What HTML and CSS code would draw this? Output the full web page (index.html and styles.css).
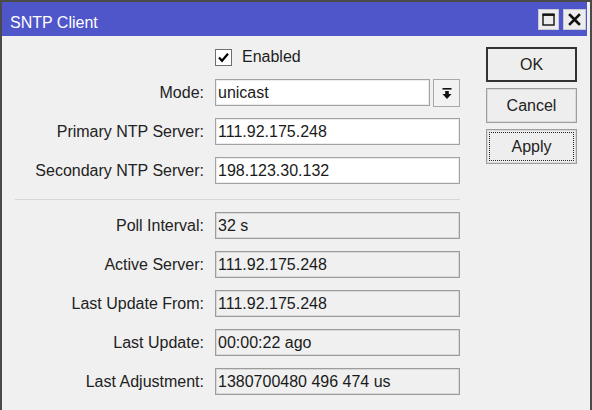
FILE: index.html
```html
<!DOCTYPE html>
<html>
<head>
<meta charset="utf-8">
<title>SNTP Client</title>
<link rel="stylesheet" href="styles.css">
</head>
<body>
<div class="window">
  <div class="titlebar">
    <span class="title">SNTP Client</span>
    <div class="title-buttons">
      <span class="tbtn"><svg width="13" height="13" viewBox="0 0 13 13"><rect x="1" y="1.5" width="11" height="10.5" fill="none" stroke="#111" stroke-width="1.4"/><rect x="0.5" y="0.5" width="12" height="2.4" fill="#111"/></svg></span>
      <span class="tbtn"><svg width="13" height="13" viewBox="0 0 13 13"><path d="M2 2 L11 11 M11 2 L2 11" stroke="#111" stroke-width="2.6" stroke-linecap="square"/></svg></span>
    </div>
  </div>
  <div class="content">
    <div class="form">
      <div class="label"></div>
      <div class="check-row">
        <span class="checkbox"><svg width="13" height="13" viewBox="0 0 13 13"><path d="M2 6.5 L5 9.8 L11 2.8" fill="none" stroke="#000" stroke-width="2.2"/></svg></span>
        <span>Enabled</span>
      </div>

      <div class="label">Mode:</div>
      <div class="combo">
        <div class="field edit">unicast</div>
        <span class="drop"><svg width="10" height="11" viewBox="0 0 10 11"><rect x="0.5" y="0" width="9" height="1.6" fill="#111"/><rect x="3.2" y="3" width="3.6" height="3.5" fill="#111"/><path d="M0.5 6 L9.5 6 L5 11 Z" fill="#111"/></svg></span>
      </div>

      <div class="label">Primary NTP Server:</div>
      <div class="field edit">111.92.175.248</div>

      <div class="label">Secondary NTP Server:</div>
      <div class="field edit">198.123.30.132</div>

      <div class="separator"></div>

      <div class="label">Poll Interval:</div>
      <div class="field ro">32 s</div>

      <div class="label">Active Server:</div>
      <div class="field ro">111.92.175.248</div>

      <div class="label">Last Update From:</div>
      <div class="field ro">111.92.175.248</div>

      <div class="label">Last Update:</div>
      <div class="field ro">00:00:22 ago</div>

      <div class="label">Last Adjustment:</div>
      <div class="field ro">1380700480 496 474 us</div>
    </div>
    <div class="buttons">
      <div class="btn default">OK</div>
      <div class="btn">Cancel</div>
      <div class="btn focused">Apply</div>
    </div>
  </div>
</div>
</body>
</html>
```

FILE: styles.css
```css
html, body {
  margin: 0;
  padding: 0;
  background: #f0f0f0;
}

body {
  font-family: "Liberation Sans", Arial, sans-serif;
  font-size: 16px;
  color: #1e1e1e;
}

.window {
  width: 588px;
  height: 408px;
  border-left: 2px solid #4a4a4a;
  border-top: 2px solid #4a4a4a;
  border-right: 2px solid #4a4a4a;
  background: #f0f0f0;
  overflow: hidden;
}

.titlebar {
  height: 34px;
  margin-right: 3px;
  background: #4e56c9;
  display: flex;
  justify-content: space-between;
  align-items: flex-start;
}

.title {
  color: #ffffff;
  line-height: 18px;
  padding-top: 12px;
  padding-left: 8px;
}

.title-buttons {
  display: flex;
  gap: 4px;
  margin-top: 7px;
  margin-right: 1px;
}

.tbtn {
  width: 19px;
  height: 19px;
  background: #ececec;
  border: 1px solid #c9c9d8;
  display: flex;
  align-items: center;
  justify-content: center;
}

.tbtn + .tbtn {
  width: 21px;
}

.content {
  display: flex;
  align-items: flex-start;
  padding: 11px 0 0 13px;
  gap: 26px;
}

.form {
  display: grid;
  grid-template-columns: 189px 245px;
  grid-template-rows: 20px 27px 27px 27px 4px 27px 27px 27px 27px 27px;
  column-gap: 11px;
  row-gap: 12px;
}

.label {
  text-align: right;
  align-self: center;
  white-space: nowrap;
  color: #222;
}

.check-row {
  display: flex;
  align-items: center;
  gap: 10px;
}

.checkbox {
  width: 15px;
  height: 15px;
  border: 1px solid #6f6f6f;
  background: #ffffff;
  display: flex;
  align-items: center;
  justify-content: center;
}

.combo {
  display: flex;
  gap: 3px;
}

.field {
  box-sizing: border-box;
  height: 27px;
  line-height: 25px;
  padding-left: 2px;
  border: 1px solid #a3a3a3;
  white-space: nowrap;
  overflow: hidden;
  color: #1a1a1a;
}

.combo .field {
  flex: 1;
}

.edit {
  background: #ffffff;
  box-shadow: inset 0 0 0 1px #ececec;
}

.ro {
  background: #f0f0f0;
  border-color: #9c9c9c;
  box-shadow: inset 0 0 0 1px #d8d8d8;
}

.drop {
  box-sizing: border-box;
  width: 27px;
  height: 28px;
  border: 1px solid #a8a8a8;
  background: #f2f2f2;
  display: flex;
  align-items: center;
  justify-content: center;
}

.separator {
  grid-column: 1 / -1;
  border-bottom: 1px solid #d6d6d6;
}

.buttons {
  display: flex;
  flex-direction: column;
  gap: 6px;
}

.btn {
  box-sizing: border-box;
  width: 91px;
  height: 35px;
  border: 1px solid #9d9d9d;
  box-shadow: inset 0 0 0 1px #dadada;
  background: #eeeeee;
  display: flex;
  align-items: center;
  justify-content: center;
  color: #222;
}

.btn.default {
  border: 2px solid #333333;
  box-shadow: none;
}

.btn.focused {
  outline: 1px dotted #222;
  outline-offset: -4px;
}
```
